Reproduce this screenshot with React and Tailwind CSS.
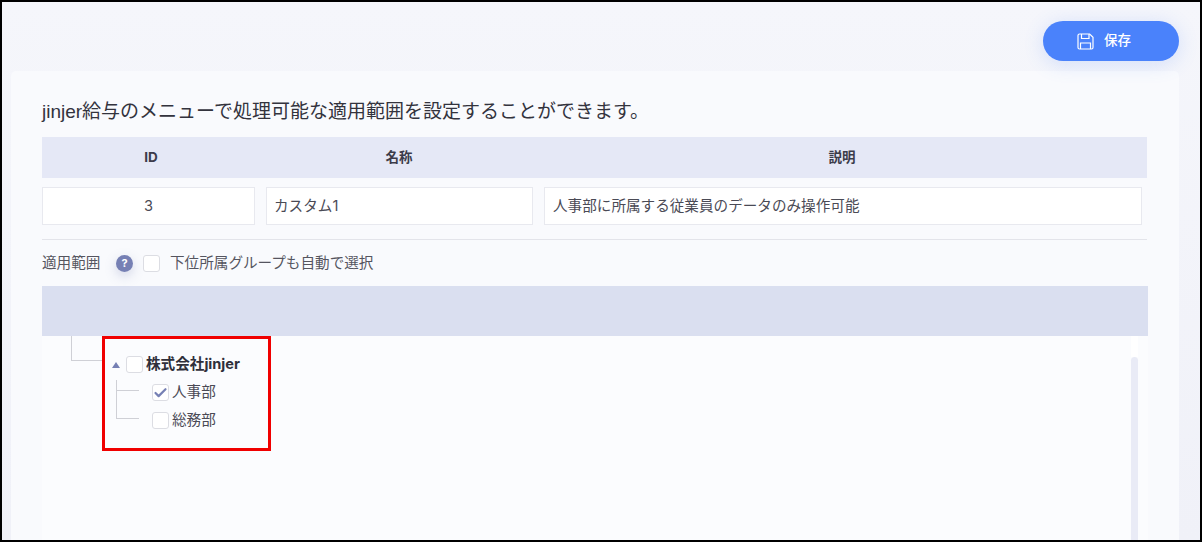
import { Check } from "lucide-react"

const FONT = { fontFamily: 'Inter, "Noto Sans CJK JP", sans-serif' }

function Box({ checked, className = "" }) {
  return (
    <span className={`flex h-[17px] w-[17px] shrink-0 items-center justify-center rounded-[3px] border border-[#dcdde3] bg-white ${className}`}>
      {checked && <Check className="h-[16px] w-[16px] text-[#7680b4]" strokeWidth={3.5} />}
    </span>
  )
}

function Cell({ className = "", children }) {
  return (
    <div className={`flex h-[38px] items-center border border-[#e8e9ef] bg-white pt-[1px] text-[14.6px] text-[#4a4a55] ${className}`}>
      {children}
    </div>
  )
}

function SaveIcon() {
  return (
    <svg width="17" height="17" viewBox="0 0 17 17" fill="none" stroke="currentColor" strokeWidth="1.2">
      <path d="M2.5 1h10.2L16 4.3v10.2a1.5 1.5 0 0 1-1.5 1.5h-12A1.5 1.5 0 0 1 1 14.5v-12A1.5 1.5 0 0 1 2.5 1z" />
      <path d="M4.5 1v4.5h7.5V1" />
      <path d="M3.5 16V10h10v6" />
    </svg>
  )
}

export default function App() {
  return (
    <div className="h-[542px] w-[1202px] overflow-hidden border-2 border-black bg-linear-to-b from-[#f5f6fb] to-[#f0f1f8]" style={FONT}>
      <div className="flex h-[69px] justify-end pr-[21px] pt-[19px]">
        <button className="flex h-[40px] w-[136px] items-center justify-center gap-[10px] rounded-full bg-[#4a82fb] pr-[14px] text-[13.5px] font-medium text-white shadow-[0_3px_20px_rgba(74,130,251,0.2)]">
          <SaveIcon />
          <span className="pb-[1px]">保存</span>
        </button>
      </div>

      <div className="ml-[9px] h-[480px] w-[1168px] rounded-t-[5px] bg-[#f9fafd] pl-[31px]">
        <p className="flex h-[66px] items-center pt-[15px] text-[19px] leading-none text-[#33333d]" style={{ fontFamily: '"Liberation Sans", "Noto Sans CJK JP", sans-serif' }}>
          jinjer給与のメニューで処理可能な適用範囲を設定することができます。
        </p>

        <div className="flex h-[41px] w-[1105px] items-center bg-[#e5e8f6] text-[13.5px] font-bold text-[#3c3c4a]">
          <span className="w-[218px] text-center">ID</span>
          <span className="w-[278px] text-center">名称</span>
          <span className="w-[608px] text-center">説明</span>
        </div>

        <div className="mt-[9px] flex w-[1100px] gap-[11px]">
          <Cell className="w-[213px] justify-center">3</Cell>
          <Cell className="w-[267px] pl-[7px]">カスタム1</Cell>
          <Cell className="w-[598px] pl-[8px]">人事部に所属する従業員のデータのみ操作可能</Cell>
        </div>

        <div className="mt-[14px] h-px w-[1105px] bg-[#e3e4ea]" />

        <div className="flex h-[46px] items-center text-[14.6px] text-[#55555f]">
          <span className="w-[74px] pt-[2px]">適用範囲</span>
          <span className="flex h-[17px] w-[17px] items-center justify-center rounded-full bg-[#7680b4] text-[11px] font-bold text-white shadow-[0_4px_12px_rgba(118,128,180,0.3)]">?</span>
          <Box className="ml-[10px]" />
          <span className="ml-[10px] pt-[2px]">下位所属グループも自動で選択</span>
        </div>

        <div className="h-[50px] w-[1106px] bg-[#dadff0]" />

        <div className="relative flex h-[204px] w-[1106px] bg-[#fbfcfe]">
          <div className="ml-[29px] h-[25px] w-[31px] border-b border-l border-[#cfd0d6]" />
          <div className="flex flex-col pt-[20px]">
            <div className="flex items-center">
              <span className="ml-[10px] h-0 w-0 border-x-[4px] border-b-[6px] border-x-transparent border-b-[#7680b4]" />
              <Box className="ml-[6px]" />
              <span className="ml-[3px] text-[14.6px] leading-[17px] font-bold text-[#2f2f3a]">株式会社jinjer</span>
            </div>
            <div className="ml-[14px] mt-[11px] flex">
              <div className="-mt-[4px] flex flex-col">
                <div className="h-[11px] w-[23px] border-b border-l border-[#cfd0d6]" />
                <div className="h-[28px] w-[23px] border-b border-l border-[#cfd0d6]" />
              </div>
              <div className="ml-[13px] flex flex-col gap-[11px]">
                <div className="flex h-[17px] items-center gap-[3px] text-[14.6px] text-[#4a4a55]"><Box checked />人事部</div>
                <div className="flex h-[17px] items-center gap-[3px] text-[14.6px] text-[#4a4a55]"><Box />総務部</div>
              </div>
            </div>
          </div>

          <div className="absolute right-[10px] top-0 flex h-full w-[7px] flex-col">
            <div className="h-[21px] bg-white" />
            <div className="flex-1 rounded-t-full bg-[#e9ebf6]" />
          </div>
          <div className="absolute left-[60px] top-0 h-[115px] w-[169px] border-[3px] border-[#f00000]" />
        </div>
      </div>
    </div>
  )
}
